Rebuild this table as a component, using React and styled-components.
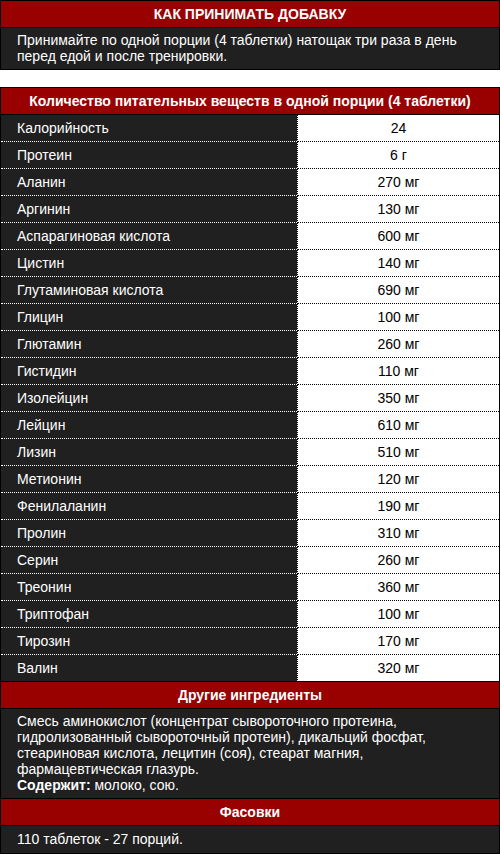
import React from 'react'
import styled, { createGlobalStyle } from 'styled-components'

const GlobalStyle = createGlobalStyle`
  body {
    margin: 0;
    background: #fff;
    font-family: "Liberation Sans", Arial, sans-serif;
    font-size: 14px;
  }
`

const Page = styled.div`
  display: flex;
  flex-direction: column;
  gap: 17px;
  width: 500px;
`

const Block = styled.section`
  display: flex;
  flex-direction: column;
  border: 1px solid #000;
  background: #202020;
`

const Heading = styled.div`
  height: 26px;
  display: flex;
  align-items: center;
  justify-content: center;
  background: #990000;
  color: #fff;
  font-weight: bold;
  font-size: 14px;
  border-bottom: 1px solid #000;
  ${p => p.$top && 'border-top: 1px solid #000;'}
`

const Text = styled.div`
  padding: ${p => p.$pad || '4px 16px 5px'};
  color: #fff;
  line-height: 16px;
`

const Row = styled.div`
  display: grid;
  grid-template-columns: 296px 1fr;
  height: 26px;
  border-bottom: 1px ${p => (p.$last ? 'solid #000' : 'dotted #fff')};
`

const Name = styled.div`
  display: flex;
  align-items: center;
  padding-left: 16px;
  color: #fff;
`

const Value = styled.div`
  display: flex;
  align-items: center;
  justify-content: center;
  background: #fff;
  color: #000;
  margin-bottom: -1px;
  border-left: 1px dotted #000;
  border-bottom: 1px ${p => (p.$last ? 'solid' : 'dotted')} #000;
`

const rows = [
  ['Калорийность', '24'],
  ['Протеин', '6 г'],
  ['Аланин', '270 мг'],
  ['Аргинин', '130 мг'],
  ['Аспарагиновая кислота', '600 мг'],
  ['Цистин', '140 мг'],
  ['Глутаминовая кислота', '690 мг'],
  ['Глицин', '100 мг'],
  ['Глютамин', '260 мг'],
  ['Гистидин', '110 мг'],
  ['Изолейцин', '350 мг'],
  ['Лейцин', '610 мг'],
  ['Лизин', '510 мг'],
  ['Метионин', '120 мг'],
  ['Фенилаланин', '190 мг'],
  ['Пролин', '310 мг'],
  ['Серин', '260 мг'],
  ['Треонин', '360 мг'],
  ['Триптофан', '100 мг'],
  ['Тирозин', '170 мг'],
  ['Валин', '320 мг']
]

export default function App () {
  return (
    <Page>
      <GlobalStyle />
      <Block>
        <Heading>КАК ПРИНИМАТЬ ДОБАВКУ</Heading>
        <Text>
          Принимайте по одной порции (4 таблетки) натощак три раза в день
          перед едой и после тренировки.
        </Text>
      </Block>
      <Block>
        <Heading>Количество питательных веществ в одной порции (4 таблетки)</Heading>
        {rows.map(([name, value], i) => (
          <Row key={name} $last={i === rows.length - 1}>
            <Name>{name}</Name>
            <Value $last={i === rows.length - 1}>{value}</Value>
          </Row>
        ))}
        <Heading>Другие ингредиенты</Heading>
        <Text>
          Смесь аминокислот (концентрат сывороточного протеина,
          гидролизованный сывороточный протеин), дикальций фосфат,
          стеариновая кислота, лецитин (соя), стеарат магния,
          фармацевтическая глазурь.
          <br />
          <b>Содержит:</b> молоко, сою.
        </Text>
        <Heading $top>Фасовки</Heading>
        <Text $pad='5px 16px 6px'>110 таблеток - 27 порций.</Text>
      </Block>
    </Page>
  )
}
